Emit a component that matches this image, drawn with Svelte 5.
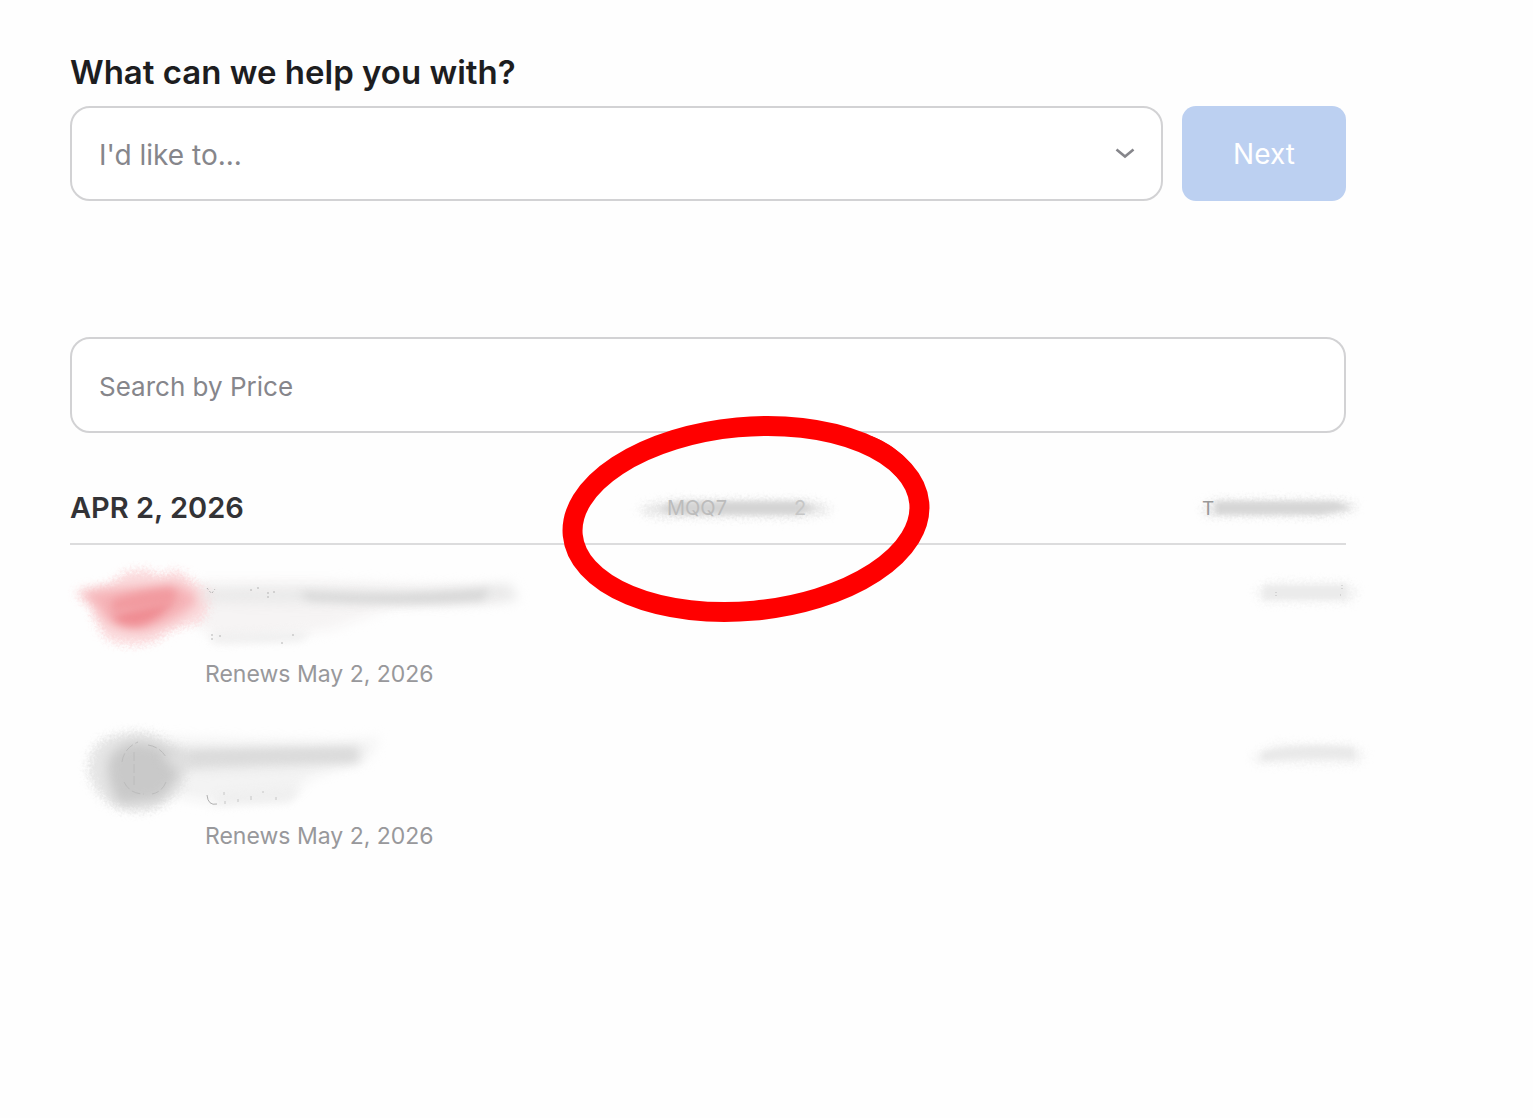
<script>
  const topics = ["I'd like to..."];
  let topic = $state(topics[0]);
  let price = $state('');
</script>

<main class="page">
  <form class="ask" onsubmit={(e) => e.preventDefault()}>
    <label class="title" for="topic">What can we help you with?</label>
    <div class="ask-row">
      <div class="select-wrap">
        <select id="topic" class="field" bind:value={topic}>
          {#each topics as t}
            <option value={t}>{t}</option>
          {/each}
        </select>
        <svg class="chevron" width="20" height="12" viewBox="0 0 20 12" aria-hidden="true">
          <path d="M1.500 1.500 10 8.500l8.500-7" fill="none" stroke="#86868b" stroke-width="2.600" />
        </svg>
      </div>
      <button class="next" type="submit">Next</button>
    </div>
  </form>

  <input class="field search" type="text" placeholder="Search by Price" aria-label="Search by Price" bind:value={price} />

  <section class="purchases">
    <header class="day">
      <h2>APR 2, 2026</h2>
      <svg class="order" width="200" height="40" viewBox="635 488 200 40" aria-hidden="true">
        <g filter="url(#grain)">
          <path d="M638 509Q660 499 690 500H800Q826 503 832 511Q810 518 780 517H670Q645 517 638 509Z" fill="#e6e6e6" />
        </g>
        <path d="M680 502H798L816 508 798 514H672L660 508Z" fill="#d4d4d4" filter="url(#soft)" />
        <text x="667" y="515" font-size="20" fill="#bcbcbc">MQQ7</text>
        <text x="794" y="515" font-size="20" fill="#c6c6c6">2</text>
      </svg>
      <svg class="total" width="146" height="40" viewBox="1200 488 146 40" aria-hidden="true">
        <g filter="url(#grain)">
          <path d="M1202 508 1214 500H1340L1358 505 1350 512 1320 516H1206Z" fill="#e6e6e6" />
        </g>
        <path d="M1216 502H1335L1350 508 1322 514H1216Z" fill="#d6d6d6" filter="url(#soft)" />
        <text x="1202" y="515" font-size="19" fill="#999">T</text>
      </svg>
    </header>

    <ul>
      <li>
        <div class="marks">
          <svg width="460" height="113" viewBox="70 545 460 113" aria-hidden="true">
            <g filter="url(#haze)">
              <path d="M195 582H330L500 588 505 600 400 604 330 630 220 642 190 620Z" fill="#f6f4f4" />
            </g>
            <g filter="url(#grain)">
              <path d="M74 592Q110 588 122 574Q145 564 160 576Q178 564 190 580L214 594 202 622Q170 628 158 640Q135 650 108 640Q92 622 92 606Z" fill="#fbdcde" />
            </g>
            <path d="M80 592Q130 588 170 584Q190 586 198 600Q180 622 145 630Q118 632 104 618Q96 604 80 592Z" fill="#f5b2b6" filter="url(#haze)" />
            <path d="M112 616Q138 606 172 600Q160 622 136 626Q118 626 112 616Z" fill="#ef8d93" filter="url(#blend)" />
            <path d="M112 600Q140 590 172 588Q182 596 168 606Q140 610 112 612Z" fill="#f19a9f" filter="url(#blend)" />
            <path d="M200 590Q310 586 400 591Q450 590 510 584L518 600Q430 606 380 603L205 602Z" fill="#e9e9e9" filter="url(#haze)" />
            <path d="M300 592Q390 598 490 589L482 600Q400 606 308 600Z" fill="#d6d6d6" filter="url(#blend)" />
            <path d="M212 635 310 632 300 641 212 642Z" fill="#ededed" filter="url(#blend)" />
            <path d="M207 588l4 5M212 593l3-4M251 589v3M257 588h2M268 592v8M274 591v3M212 634v8M220 635v2M281 643h4M293 634v3" stroke="#b4b4b4" stroke-dasharray="2 2" fill="none" />
          </svg>
          <svg width="96" height="113" viewBox="1250 545 96 113" aria-hidden="true">
            <path d="M1254 591 1272 582H1345L1359 591 1350 602H1262Z" fill="#f2f2f2" filter="url(#grain)" />
            <path d="M1264 586H1346V599H1264Z" fill="#ebebeb" filter="url(#soft)" />
            <path d="M1342 585v5M1340 595h3M1276 592v4" stroke="#bbb" stroke-dasharray="1 2" />
          </svg>
        </div>
        <p>Renews May 2, 2026</p>
      </li>
      <li>
        <div class="marks">
          <svg width="460" height="113" viewBox="70 707 460 113" aria-hidden="true">
            <path d="M160 738 340 742 380 738 368 758 310 778 290 798 215 804 170 795Z" fill="#f3f3f3" filter="url(#haze)" />
            <g filter="url(#grain)">
              <path d="M88 768Q88 740 118 734Q150 726 168 742L190 752 184 785Q170 804 150 811Q120 814 104 800Q88 785 88 768Z" fill="#e6e6e6" />
            </g>
            <path d="M108 762Q114 744 138 742Q165 745 180 758Q182 782 158 800L120 804Q106 785 108 762Z" fill="#c9c9c9" filter="url(#haze)" />
            <path d="M160 752 358 747 360 762 175 770Z" fill="#dedede" filter="url(#haze)" />
            <path d="M190 752 355 750 356 760 190 762Z" fill="#dadada" filter="url(#blend)" />
            <path d="M216 794 300 788 290 801 216 804Z" fill="#eeeeee" filter="url(#blend)" />
            <path d="M122 762q2-14 16-20M148 745q12 2 18 12M124 782q6 12 20 12M166 782q-4 10-14 12M134 752v34" fill="none" stroke="#bcbcbc" stroke-dasharray="9 3" />
            <path d="M207 795q1 11 10 9" fill="none" stroke="#b0b0b0" />
            <path d="M224 792v3M225 801v3M238 799v3M251 796v4M263 791v2M276 797v3" stroke="#c6c6c6" />
          </svg>
          <svg width="96" height="113" viewBox="1250 707 96 113" aria-hidden="true">
            <path d="M1250 757 1276 744H1350L1366 754 1358 764 1258 764Z" fill="#f3f3f3" filter="url(#grain)" />
            <path d="M1262 752Q1300 743 1354 748V759Q1300 756 1262 761Z" fill="#e9e9e9" filter="url(#soft)" />
          </svg>
        </div>
        <p>Renews May 2, 2026</p>
      </li>
    </ul>
  </section>

  <svg class="ring" width="372" height="210" viewBox="560 414 372 210" aria-hidden="true">
    <defs>
      <filter id="soft" x="-30%" y="-80%" width="160%" height="260%" color-interpolation-filters="sRGB"><feGaussianBlur stdDeviation="2.500" /></filter>
      <filter id="blend" x="-30%" y="-100%" width="160%" height="300%" color-interpolation-filters="sRGB"><feGaussianBlur stdDeviation="4" /></filter>
      <filter id="haze" x="-30%" y="-80%" width="160%" height="260%" color-interpolation-filters="sRGB"><feGaussianBlur stdDeviation="6" /></filter>
      <filter id="grain" x="-30%" y="-80%" width="160%" height="260%" color-interpolation-filters="sRGB">
        <feGaussianBlur stdDeviation="4" result="b" />
        <feTurbulence type="fractalNoise" baseFrequency="0.4" numOctaves="2" seed="4" result="n" />
        <feDisplacementMap in="b" in2="n" scale="12" xChannelSelector="R" yChannelSelector="G" />
      </filter>
    </defs>
    <ellipse cx="746" cy="519" rx="174" ry="92" transform="rotate(-5.300 746 519)" fill="none" stroke="#f00" stroke-width="20" />
    <path d="M868 445Q890 453 906 473" fill="none" stroke="#f00" stroke-width="19" />
  </svg>
</main>

<style>
  :global(body) {
    margin: 0;
    background: #fefefe;
  }
  .page {
    position: relative;
    box-sizing: border-box;
    padding: 52px 187px 52px 70px;
    font-family: Inter, 'Liberation Sans', sans-serif;
  }
  .title {
    display: block;
    font-size: 33px;
    line-height: 40px;
    font-weight: 600;
    color: #1d1d1f;
    margin-bottom: 14px;
  }
  .ask-row {
    display: flex;
    gap: 19px;
  }
  .select-wrap {
    flex: 1;
    display: grid;
    align-items: center;
  }
  .select-wrap > * {
    grid-area: 1 / 1;
  }
  .field {
    box-sizing: border-box;
    width: 100%;
    height: 95px;
    padding: 2px 27px 0;
    border: 2px solid #d2d2d4;
    border-radius: 20px;
    background: #fff;
    color: #86868b;
    font-family: inherit;
    font-size: 28px;
    appearance: none;
  }
  .chevron {
    justify-self: end;
    margin-right: 28px;
    pointer-events: none;
  }
  .next {
    width: 164px;
    border: 0;
    border-radius: 14px;
    background: #bcd0f1;
    color: #fff;
    font-family: inherit;
    font-size: 28px;
  }
  .search {
    display: block;
    height: 96px;
    margin-top: 136px;
    font-size: 26px;
  }
  .search::placeholder {
    color: #86868b;
    opacity: 1;
  }
  .day {
    display: grid;
    grid-template-columns: 565px 1fr auto;
    align-items: center;
    margin-top: 55px;
    padding-bottom: 15px;
    border-bottom: 2px solid #dcdcdd;
  }
  .day h2 {
    margin: 0;
    font-size: 29px;
    line-height: 40px;
    font-weight: 600;
    color: #333336;
  }
  svg {
    display: block;
    overflow: visible;
  }
  ul {
    margin: 0;
    padding: 0;
    list-style: none;
  }
  li {
    padding-bottom: 17px;
  }
  .marks {
    display: flex;
    justify-content: space-between;
  }
  li p {
    margin: 0;
    padding-left: 135px;
    font-size: 23px;
    line-height: 32px;
    color: #98989b;
  }
  .ring {
    position: absolute;
    left: 560px;
    top: 414px;
    pointer-events: none;
  }
</style>
